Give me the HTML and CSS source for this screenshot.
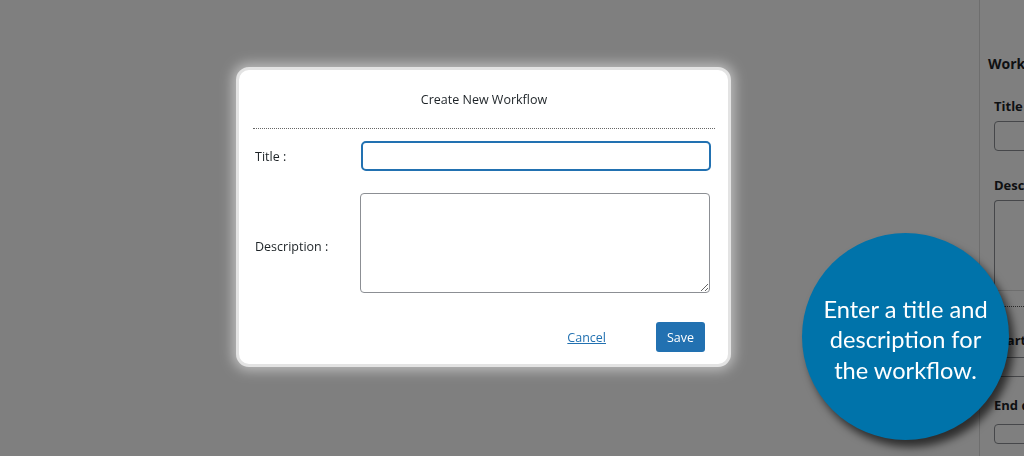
FILE: index.html
```html
<!DOCTYPE html>
<html>
<head>
<meta charset="utf-8">
<link rel="stylesheet" href="styles.css">
</head>
<body>
<div class="page">
  <main class="content"></main>
  <aside class="sidebar">
    <h2 class="side-heading">Workflow</h2>
    <div class="side-field">
      <div class="side-label">Title</div>
      <div class="side-input"></div>
    </div>
    <div class="side-section">
      <div class="side-label">Description</div>
      <div class="side-textarea"></div>
    </div>
    <div class="side-dots"></div>
    <div class="side-field">
      <div class="side-label start">Start date</div>
      <div class="side-input short"></div>
    </div>
    <div class="side-field">
      <div class="side-label end">End date</div>
      <div class="side-input short last"></div>
    </div>
  </aside>
</div>

<div class="overlay">
  <div class="dialog">
    <div class="dialog-header">Create New Workflow</div>
    <div class="dialog-body">
      <label class="field-label" for="wf-title">Title :</label>
      <input class="field-input" id="wf-title" type="text">
      <label class="field-label desc-label" for="wf-desc">Description :</label>
      <textarea class="field-textarea" id="wf-desc"></textarea>
    </div>
    <div class="dialog-footer">
      <a class="cancel-link" href="#">Cancel</a>
      <button class="save-btn" type="button">Save</button>
    </div>
  </div>
</div>

<div class="callout">
  <p class="callout-text">Enter a title and<br>description for<br>the workflow.</p>
</div>
</body>
</html>
```

FILE: styles.css
```css
* { box-sizing: border-box; }

html, body {
  margin: 0;
  padding: 0;
  width: 1024px;
  height: 456px;
  overflow: hidden;
  background: #ffffff;
  font-family: "Open Sans", "Noto Sans", sans-serif;
  color: #1d2327;
}

.page {
  display: flex;
  height: 456px;
}

.content {
  width: 979px;
  flex: none;
}

.sidebar {
  flex: 1;
  border-left: 1px solid #dcdcdc;
  padding-left: 8px;
  white-space: nowrap;
  overflow: hidden;
}

.side-heading {
  margin: 0;
  padding-top: 54px;
  font-size: 14px;
  line-height: 20px;
  font-weight: 700;
}

.side-field {
  padding-left: 6px;
}

.side-label {
  font-size: 13px;
  font-weight: 700;
  line-height: 18px;
  padding-top: 23px;
}

.side-input {
  margin-top: 6px;
  height: 30px;
  width: 60px;
  border: 1px solid #8c8f94;
  border-radius: 4px;
}

.side-section {
  border-bottom: 1px solid #dcdcdc;
  margin-left: -8px;
  padding-left: 14px;
}

.side-section .side-label {
  padding-top: 25px;
}

.side-textarea {
  margin-top: 6px;
  height: 90px;
  width: 60px;
  border: 1px solid #8c8f94;
  border-bottom: none;
  border-radius: 4px 4px 0 0;
}

.side-dots {
  margin-top: 15px;
  margin-left: 16px;
  border-top: 1px dotted #555;
}

.side-label.start {
  padding-top: 24px;
}

.side-input.short {
  height: 20px;
  margin-top: 8px;
}

.side-label.end {
  padding-top: 19px;
}

.side-input.last {
  margin-top: 10px;
}

/* overlay + dialog */
.overlay {
  position: fixed;
  inset: 0;
  background: rgba(0, 0, 0, 0.5);
  padding: 67px 0 0 236px;
}

.dialog {
  width: 495px;
  background: #ffffff;
  border: 3px solid #e3e3e3;
  border-radius: 13px;
  box-shadow: 0 0 12px 4px rgba(255, 255, 255, 0.45);
  padding: 0 13px 12px 14px;
  font-size: 12.5px;
}

.dialog-header {
  text-align: center;
  line-height: 18px;
  padding: 21px 0 19px;
  border-bottom: 1px dotted #666;
  font-size: 12.5px;
}

.dialog-body {
  display: grid;
  grid-template-columns: 105px 350px;
  align-items: center;
  row-gap: 22px;
  padding: 12px 0 0 2px;
}

.field-label {
  font-size: 12.5px;
  line-height: 18px;
  position: relative;
  top: 1px;
}

.desc-label {
  top: 4px;
}

.field-input {
  margin: 0 0 0 1px;
  width: 350px;
  height: 30px;
  border: 2px solid #2271b1;
  border-radius: 5px;
  outline: none;
  font: inherit;
}

.field-textarea {
  display: block;
  margin: 0;
  width: 350px;
  height: 100px;
  border: 1px solid #8c8f94;
  border-radius: 4px;
  font: inherit;
}

.dialog-footer {
  display: flex;
  justify-content: flex-end;
  align-items: center;
  gap: 50px;
  padding: 29px 10px 0 0;
}

.cancel-link {
  color: #2271b1;
  text-decoration: underline;
  font-size: 12.5px;
}

.save-btn {
  height: 30px;
  width: 49px;
  padding: 0;
  background: #2271b1;
  color: #ffffff;
  border: none;
  border-radius: 3px;
  font: inherit;
  font-size: 12.5px;
}

/* callout bubble */
.callout {
  position: absolute;
  left: 802px;
  top: 233px;
  width: 207px;
  height: 207px;
  border-radius: 50%;
  background: #0073aa;
  box-shadow: 5px 7px 9px rgba(0, 0, 0, 0.65);
  display: flex;
  align-items: center;
  justify-content: center;
}

.callout-text {
  margin: 6px 0 0 0;
  color: #ffffff;
  text-align: center;
  font-family: Lato, "Open Sans", sans-serif;
  font-size: 23.6px;
  line-height: 30.5px;
}
```
